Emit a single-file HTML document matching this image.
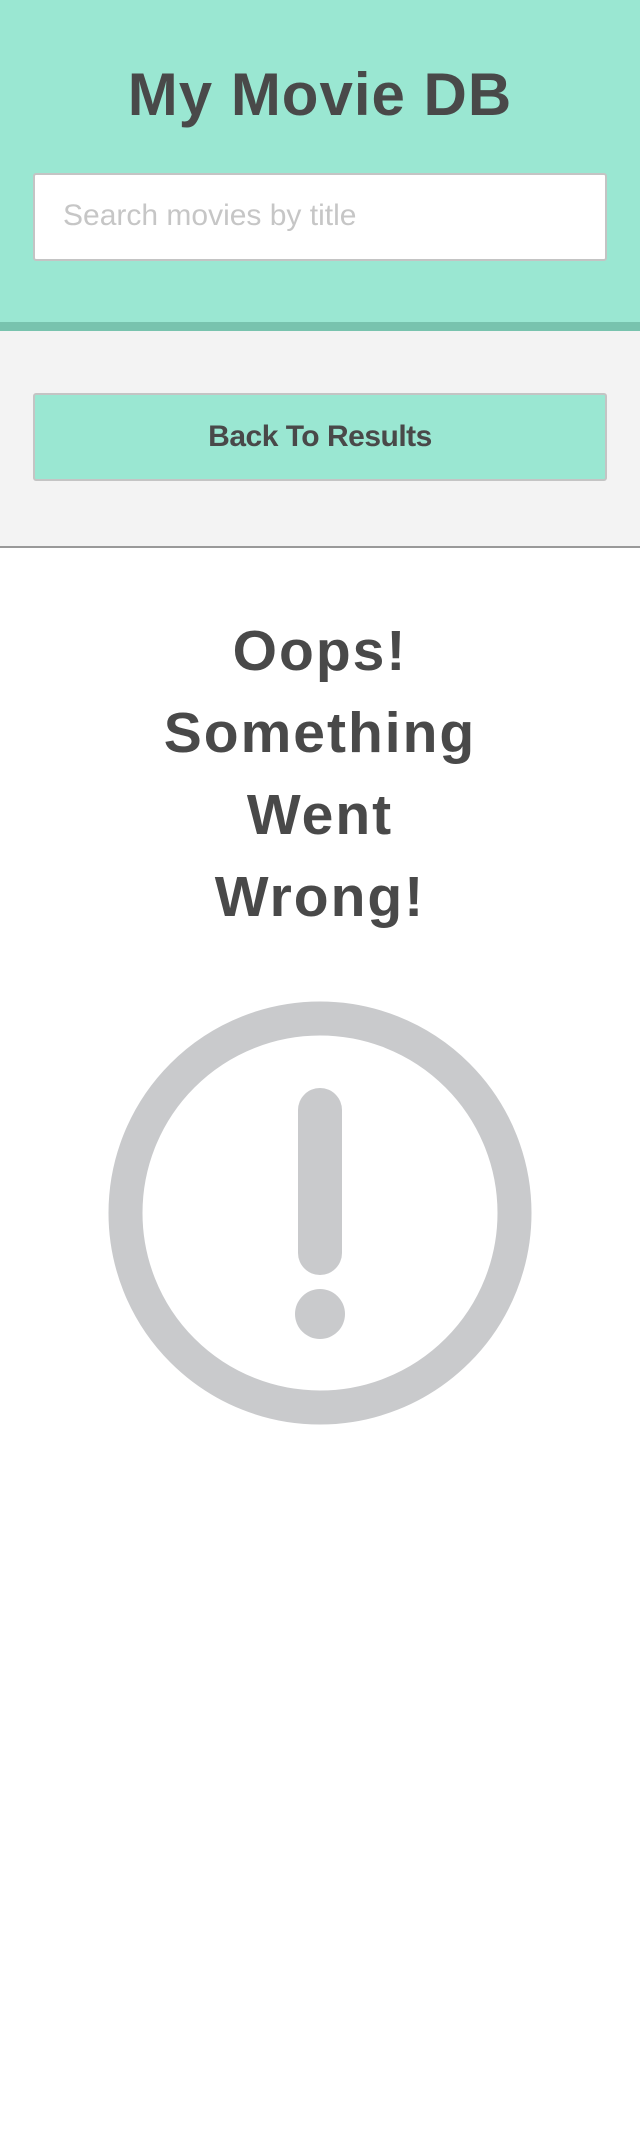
<!DOCTYPE html>
<html><head><style>
html,body{margin:0;padding:0;background:#fff;width:640px;height:2156px;overflow:hidden;font-family:"Liberation Sans",sans-serif;color:#494949}
.hdr{position:absolute;left:0;top:0;width:640px;height:322px;background:#9ae7d2}
.bar{position:absolute;left:0;top:322px;width:640px;height:9px;background:#78c3ae}
h1{position:absolute;left:0;top:60px;width:640px;margin:0;text-align:center;font-size:60px;line-height:70px;font-weight:bold;letter-spacing:1px}
.inp{position:absolute;left:33px;top:173px;width:570px;height:84px;background:#fff;border:2px solid #c4c4c4;border-radius:3px}
.inp span{position:absolute;left:28px;top:24px;font-size:30px;color:#c6c6c6}
.grey{position:absolute;left:0;top:331px;width:640px;height:215px;background:#f3f3f3;border-bottom:2px solid #999}
.btn{position:absolute;left:33px;top:393px;width:570px;height:84px;background:#9ae7d2;border:2px solid #c4c4c4;border-radius:3px;text-align:center;font-weight:bold;font-size:30px;line-height:84px;letter-spacing:-0.5px}
.msg{position:absolute;left:0;top:610px;width:640px;text-align:center;font-size:57px;line-height:82px;font-weight:bold;margin:0;letter-spacing:2px}
</style></head><body>
<div class="hdr"></div><div class="bar"></div>
<h1>My Movie DB</h1>
<div class="inp"><span>Search movies by title</span></div>
<div class="grey"></div>
<div class="btn">Back To Results</div>
<div class="msg">Oops!<br>Something<br>Went<br>Wrong!</div>
<svg style="position:absolute;left:0;top:0" width="640" height="2156">
<circle cx="320" cy="1213" r="194.5" fill="none" stroke="#c9cacc" stroke-width="34"/>
<line x1="320" y1="1110" x2="320" y2="1253" stroke="#c9cacc" stroke-width="44" stroke-linecap="round"/>
<circle cx="320" cy="1314" r="25" fill="#c9cacc"/>
</svg>
</body></html>
